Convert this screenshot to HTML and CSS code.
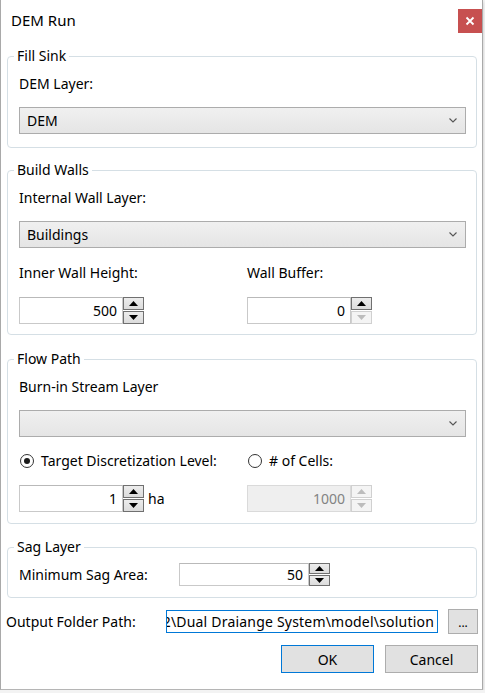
FILE: index.html
```html
<!DOCTYPE html>
<html>
<head>
<meta charset="utf-8">
<title>DEM Run</title>
<link rel="stylesheet" href="styles.css">
</head>
<body>
<div class="window">
  <div class="titlebar">
    <div class="title">DEM Run</div>
    <div class="close">
      <svg width="10" height="10" viewBox="0 0 10 10"><path d="M1.5 1.5 L8.5 8.5 M8.5 1.5 L1.5 8.5" stroke="#fff" stroke-width="1.8" fill="none"/></svg>
    </div>
  </div>

  <div class="group g-fill">
    <div class="group-title">Fill Sink</div>
    <div class="label">DEM Layer:</div>
    <div class="combo">
      <span>DEM</span>
      <svg class="chev" width="8" height="5" viewBox="0 0 8 5"><path d="M0.5 0.5 L4 4 L7.5 0.5" stroke="#555" stroke-width="1.1" fill="none"/></svg>
    </div>
  </div>

  <div class="group g-walls">
    <div class="group-title">Build Walls</div>
    <div class="label">Internal Wall Layer:</div>
    <div class="combo">
      <span>Buildings</span>
      <svg class="chev" width="8" height="5" viewBox="0 0 8 5"><path d="M0.5 0.5 L4 4 L7.5 0.5" stroke="#555" stroke-width="1.1" fill="none"/></svg>
    </div>
    <div class="two-col labels-row">
      <div class="label">Inner Wall Height:</div>
      <div class="label">Wall Buffer:</div>
    </div>
    <div class="two-col spin-row">
      <div class="spin">
        <div class="spin-box">500</div>
        <div class="spin-btns">
          <div class="sb"><svg width="9" height="5" viewBox="0 0 9 5"><path d="M0 5 L4.5 0 L9 5 Z" fill="#000"/></svg></div>
          <div class="sb"><svg width="9" height="5" viewBox="0 0 9 5"><path d="M0 0 L4.5 5 L9 0 Z" fill="#000"/></svg></div>
        </div>
      </div>
      <div class="spin">
        <div class="spin-box">0</div>
        <div class="spin-btns">
          <div class="sb"><svg width="9" height="5" viewBox="0 0 9 5"><path d="M0 5 L4.5 0 L9 5 Z" fill="#000"/></svg></div>
          <div class="sb disabled"><svg width="9" height="5" viewBox="0 0 9 5"><path d="M0 0 L4.5 5 L9 0 Z" fill="#bcbcbc"/></svg></div>
        </div>
      </div>
    </div>
  </div>

  <div class="group g-flow">
    <div class="group-title">Flow Path</div>
    <div class="label">Burn-in Stream Layer</div>
    <div class="combo">
      <span></span>
      <svg class="chev" width="8" height="5" viewBox="0 0 8 5"><path d="M0.5 0.5 L4 4 L7.5 0.5" stroke="#555" stroke-width="1.1" fill="none"/></svg>
    </div>
    <div class="two-col radio-row">
      <div class="radio-item"><span class="radio checked"></span><span>Target Discretization Level:</span></div>
      <div class="radio-item"><span class="radio"></span><span># of Cells:</span></div>
    </div>
    <div class="two-col spin-row">
      <div class="spin">
        <div class="spin-box">1</div>
        <div class="spin-btns">
          <div class="sb"><svg width="9" height="5" viewBox="0 0 9 5"><path d="M0 5 L4.5 0 L9 5 Z" fill="#000"/></svg></div>
          <div class="sb"><svg width="9" height="5" viewBox="0 0 9 5"><path d="M0 0 L4.5 5 L9 0 Z" fill="#000"/></svg></div>
        </div>
        <span class="unit">ha</span>
      </div>
      <div class="spin">
        <div class="spin-box disabled">1000</div>
        <div class="spin-btns">
          <div class="sb disabled"><svg width="9" height="5" viewBox="0 0 9 5"><path d="M0 5 L4.5 0 L9 5 Z" fill="#bcbcbc"/></svg></div>
          <div class="sb disabled"><svg width="9" height="5" viewBox="0 0 9 5"><path d="M0 0 L4.5 5 L9 0 Z" fill="#bcbcbc"/></svg></div>
        </div>
      </div>
    </div>
  </div>

  <div class="group g-sag">
    <div class="group-title">Sag Layer</div>
    <div class="sag-row">
      <div class="label">Minimum Sag Area:</div>
      <div class="spin small">
        <div class="spin-box wide">50</div>
        <div class="spin-btns">
          <div class="sb"><svg width="9" height="5" viewBox="0 0 9 5"><path d="M0 5 L4.5 0 L9 5 Z" fill="#000"/></svg></div>
          <div class="sb"><svg width="9" height="5" viewBox="0 0 9 5"><path d="M0 0 L4.5 5 L9 0 Z" fill="#000"/></svg></div>
        </div>
      </div>
    </div>
  </div>

  <div class="output-row">
    <div class="label">Output Folder Path:</div>
    <div class="path-box"><span>C:\Projects\2022\Dual Draiange System\model\solution</span></div>
    <div class="btn browse">...</div>
  </div>

  <div class="buttons">
    <div class="btn default">OK</div>
    <div class="btn">Cancel</div>
  </div>
</div>
</body>
</html>
```

FILE: styles.css
```css
* { box-sizing: border-box; }

body {
  margin: 0;
  background: #f3f3f3;
  font-family: "Noto Sans", "Open Sans", sans-serif;
  font-size: 14px;
  color: #000;
}

.window {
  width: 483px;
  height: 690px;
  background: #fff;
  border-left: 1px solid #a9a9a9;
  border-right: 1px solid #a9a9a9;
  border-bottom: 1px solid #b5b5b5;
  box-shadow: 0 2px 3px rgba(0, 0, 0, 0.18);
}

.titlebar {
  height: 56px;
  display: flex;
  justify-content: space-between;
  align-items: flex-start;
  padding: 9px 0 0 10px;
}

.title {
  font-size: 15px;
  line-height: 22px;
}

.close {
  width: 24px;
  height: 24px;
  background: #c75050;
  display: flex;
  align-items: center;
  justify-content: center;
}

.group {
  margin: 0 5px 0 6px;
  border: 1px solid #d5dfe5;
  border-radius: 4px;
  padding: 0 10px 13px 11px;
}

.group-title {
  margin: -11px 0 0 -5px;
  padding: 0 3px;
  width: fit-content;
  background: #fff;
  line-height: 20px;
}

.label {
  line-height: 20px;
  white-space: nowrap;
}

.group > .label { margin-top: 8px; }

.combo {
  margin-top: 13px;
  height: 27px;
  border: 1px solid #acacac;
  background: linear-gradient(#f0f0f0, #e5e5e5);
  display: flex;
  align-items: center;
  justify-content: space-between;
  padding: 0 8px 0 7px;
}

.g-walls { margin-top: 22px; padding-bottom: 10px; }
.g-flow { margin-top: 24px; padding-bottom: 11px; }
.g-sag { margin-top: 23px; padding-bottom: 11px; }

.two-col {
  display: grid;
  grid-template-columns: 228px 1fr;
}

.labels-row { margin-top: 15px; }
.spin-row { margin-top: 14px; }
.radio-row { margin-top: 14px; line-height: 20px; }

.spin {
  display: flex;
  align-items: stretch;
  height: 27px;
}

.spin-box {
  width: 104px;
  border: 1px solid #c9c9c9;
  border-top-color: #b9b9b9;
  text-align: right;
  padding-right: 5px;
  line-height: 25px;
  background: #fff;
}

.spin-box.disabled {
  color: #838383;
  background: #efefef;
  border-color: #dadada;
}

.spin-btns {
  width: 21px;
  display: flex;
  flex-direction: column;
  gap: 1px;
}

.sb {
  flex: 1;
  border: 1px solid #707070;
  background: linear-gradient(#ececec, #dcdcdc);
  display: flex;
  align-items: center;
  justify-content: center;
}

.sb.disabled {
  border-color: #d0d0d0;
  background: #f4f4f4;
}

.unit {
  margin-left: 4px;
  line-height: 27px;
}

.radio-item {
  display: flex;
  align-items: center;
  gap: 7px;
  margin-left: 1px;
}

.radio {
  width: 14px;
  height: 14px;
  border: 1px solid #333;
  border-radius: 50%;
  background: #fff;
  display: flex;
  align-items: center;
  justify-content: center;
}

.radio.checked::after {
  content: "";
  width: 6px;
  height: 6px;
  border-radius: 50%;
  background: #1a1a1a;
}

.sag-row {
  margin-top: 6px;
  display: grid;
  grid-template-columns: 160px auto;
  align-items: center;
}

.spin.small { height: 23px; }
.spin-box.wide { width: 130px; line-height: 21px; }

.output-row {
  margin: 11px 0 0 5px;
  display: flex;
  align-items: center;
  height: 25px;
}

.output-row .label { width: 160px; }

.path-box {
  width: 272px;
  height: 23px;
  border: 1px solid #0078d7;
  display: flex;
  justify-content: flex-end;
  overflow: hidden;
  white-space: nowrap;
  line-height: 21px;
  padding-right: 3px;
}

.path-box span {
  flex-shrink: 0;
  letter-spacing: 0.2px;
}

.btn {
  border: 1px solid #adadad;
  background: #e1e1e1;
  display: flex;
  align-items: center;
  justify-content: center;
}

.btn.browse {
  margin-left: 10px;
  width: 30px;
  height: 25px;
  font-size: 12px;
  padding-top: 2px;
}

.btn.default { border-color: #0078d7; }

.buttons {
  margin: 11px 4px 0 0;
  display: flex;
  justify-content: flex-end;
  gap: 11px;
}

.buttons .btn {
  width: 93px;
  height: 28px;
}
```
